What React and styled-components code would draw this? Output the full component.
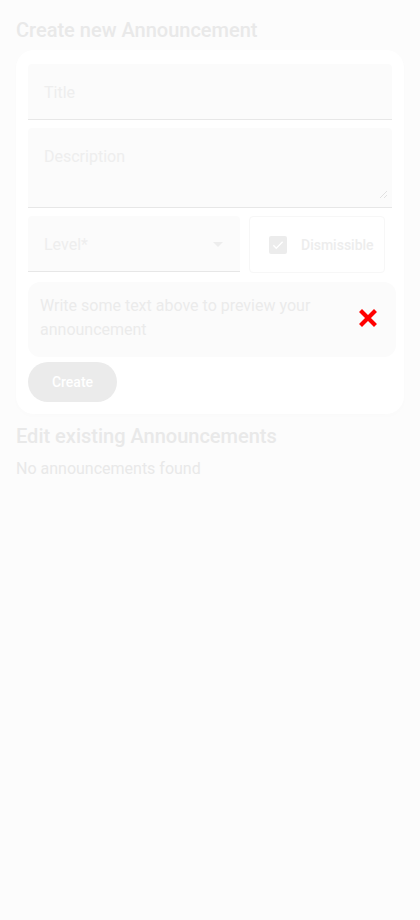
import React from 'react';
import styled, { createGlobalStyle } from 'styled-components';

const GlobalStyle = createGlobalStyle`
  html, body {
    margin: 0;
    padding: 0;
    background: #fcfcfc;
    font-family: Roboto, "Liberation Sans", sans-serif;
  }
`

const Page = styled.div`
  min-height: 920px;
  padding: 16px 16px 0;
  box-sizing: border-box;
  background: #fcfcfc;
`

const Heading = styled.h2`
  margin: 0;
  font-size: 20px;
  font-weight: 500;
  line-height: 28px;
  color: #e9e9e9;
`

const Card = styled.div`
  margin: 6px 0 8px;
  width: 388px;
  padding: 14px 12px 12px;
  box-sizing: border-box;
  background: #ffffff;
  border-radius: 18px;
  box-shadow: 0 2px 6px rgba(0, 0, 0, 0.012);
  display: flex;
  flex-direction: column;
  gap: 8px;
`

const Field = styled.div`
  width: ${(p) => p.width || '364px'};
  height: ${(p) => p.height || '56px'};
  box-sizing: border-box;
  background: #fbfbfb;
  border-bottom: 1px solid #e7e7e7;
  border-radius: 4px 4px 0 0;
  position: relative;
  padding: 19px 16px 0;
  display: flex;
  justify-content: space-between;
  font-size: 16px;
  color: #eeeeee;
`

const Resize = styled.svg`
  position: absolute;
  right: 4px;
  bottom: 8px;
`

const Row = styled.div`
  display: flex;
  gap: 9px;
  align-items: flex-start;
`

const Caret = styled.span`
  width: 0;
  height: 0;
  margin-top: 7px;
  margin-right: 1px;
  border-left: 5px solid transparent;
  border-right: 5px solid transparent;
  border-top: 5px solid #ededed;
`

const CheckBox = styled.div`
  width: 136px;
  height: 57px;
  box-sizing: border-box;
  border: 1px solid #f7f7f7;
  border-radius: 4px;
  display: flex;
  align-items: center;
  padding-left: 19px;
  gap: 14px;
  font-size: 14px;
  font-weight: 500;
  color: #ededed;
`

const Box = styled.span`
  width: 18px;
  height: 18px;
  border-radius: 2px;
  background: #ececec;
  display: flex;
  align-items: center;
  justify-content: center;
`

const Preview = styled.div`
  width: 368px;
  box-sizing: border-box;
  margin-top: 1px;
  padding: 12px 19px 15px 12px;
  border-radius: 12px;
  background: #fbfbfb;
  display: flex;
  align-items: center;
  justify-content: space-between;
  font-size: 16px;
  line-height: 24px;
  color: #ebebeb;
`

const PreviewText = styled.div`
  width: 290px;
`

const Button = styled.button`
  align-self: flex-start;
  margin-top: -3px;
  width: 89px;
  height: 40px;
  border: none;
  border-radius: 20px;
  background: #ebebeb;
  color: #ffffff;
  font-family: inherit;
  font-size: 14px;
  font-weight: 500;
`

const Empty = styled.p`
  margin: 7px 0 0;
  font-size: 16px;
  line-height: 24px;
  color: #e9e9e9;
`

function App() {
  return (
    <Page>
      <GlobalStyle />
      <Heading>Create new Announcement</Heading>
      <Card>
        <Field>Title</Field>
        <Field height="80px">
          Description
          <Resize width="9" height="9" viewBox="0 0 9 9">
            <path d="M8 1L1 8M8 5L5 8" stroke="#e2e2e2" strokeWidth="1" />
          </Resize>
        </Field>
        <Row>
          <Field width="212px">
            Level*
            <Caret />
          </Field>
          <CheckBox>
            <Box>
              <svg width="14" height="14" viewBox="0 0 24 24">
                <path d="M4 12.5l5 5L20 6.5" fill="none" stroke="#ffffff" strokeWidth="2.4" />
              </svg>
            </Box>
            Dismissible
          </CheckBox>
        </Row>
        <Preview>
          <PreviewText>Write some text above to preview your announcement</PreviewText>
          <svg width="18" height="18" viewBox="0 0 18 18">
            <path d="M3 3L15 15M15 3L3 15" stroke="#f00" strokeWidth="4.2" strokeLinecap="square" />
          </svg>
        </Preview>
        <Button>Create</Button>
      </Card>
      <Heading>Edit existing Announcements</Heading>
      <Empty>No announcements found</Empty>
    </Page>
  );
}

export default App;
